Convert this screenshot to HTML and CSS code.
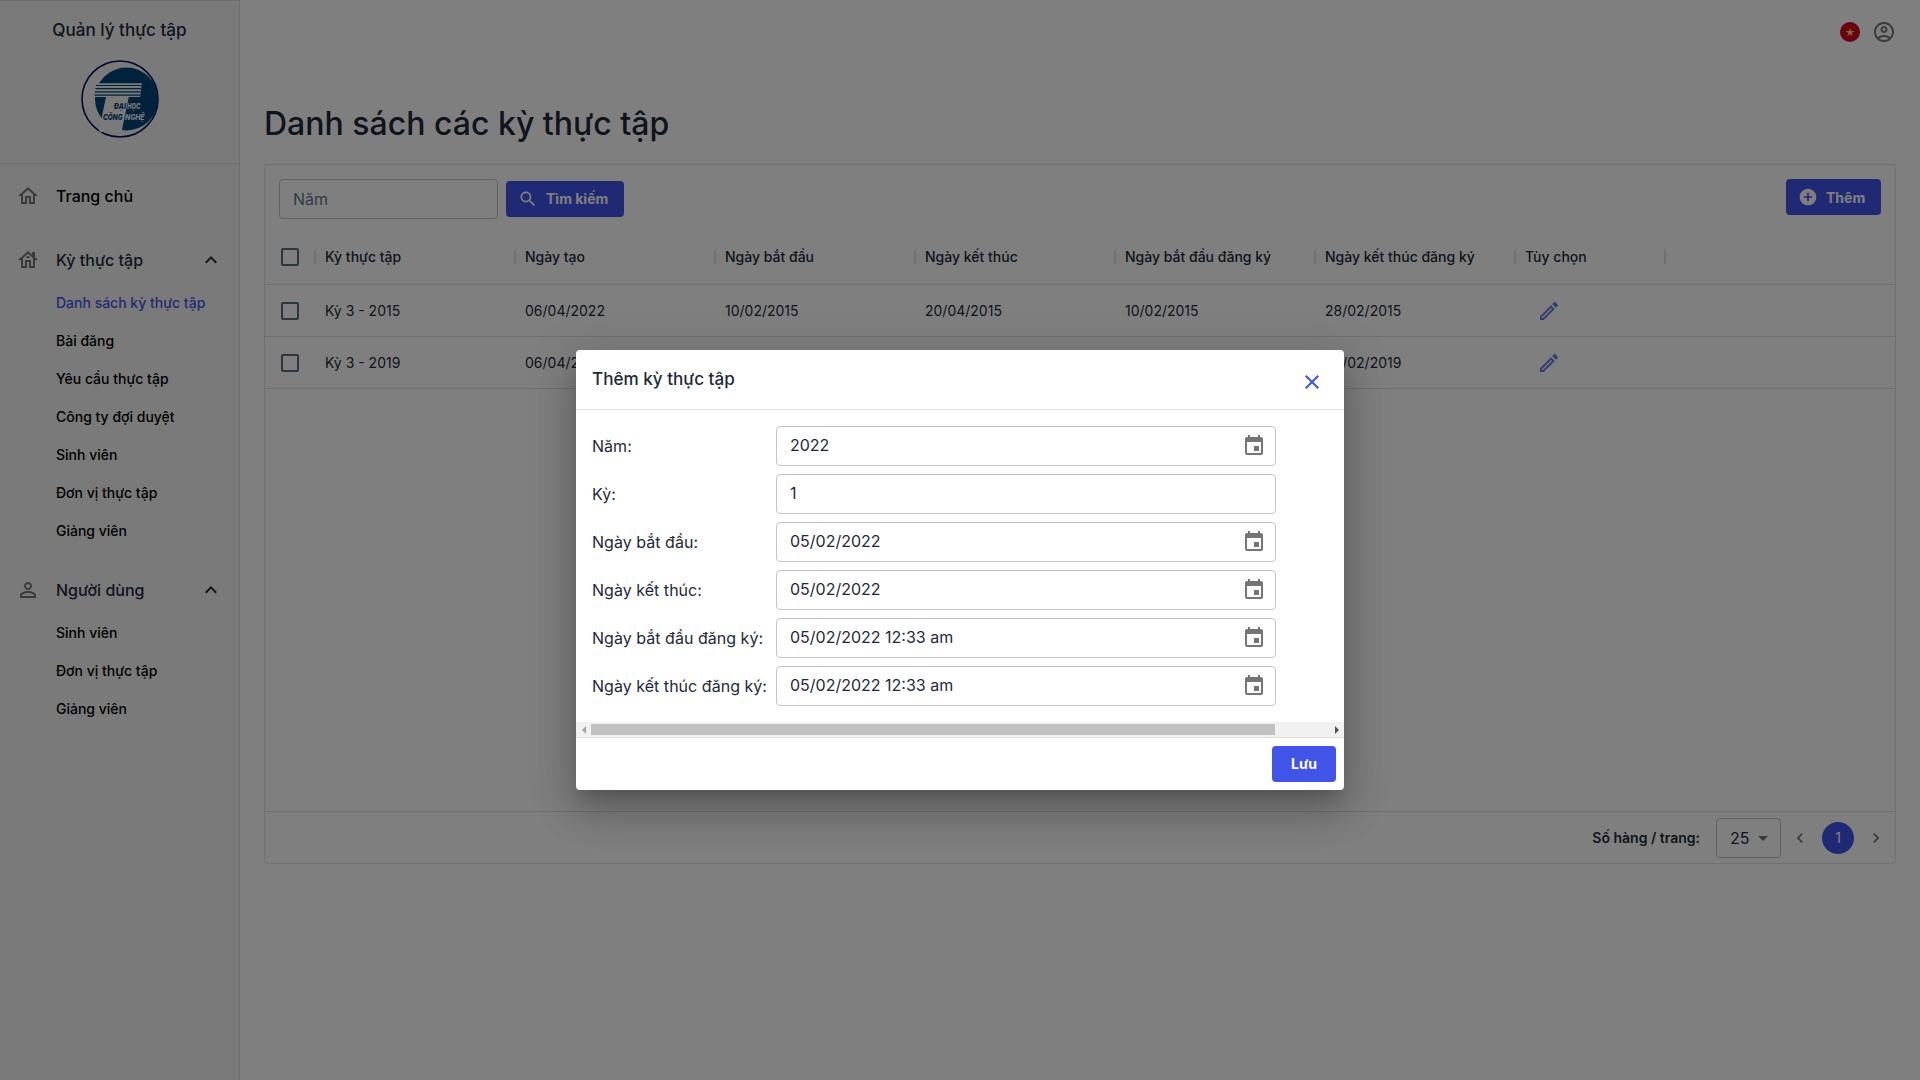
FILE: index.html
```html
<!DOCTYPE html>
<html lang="vi">
<head>
<meta charset="utf-8">
<title>Quản lý thực tập</title>
<link rel="stylesheet" href="styles.css">
</head>
<body>
<svg class="defs" width="0" height="0" aria-hidden="true">
  <symbol id="i-home" viewBox="0 0 24 24"><path d="M12 5.69l5 4.5V18h-2v-6H9v6H7v-7.81l5-4.5M12 3L2 12h3v8h6v-6h2v6h6v-8h3L12 3z"/></symbol>
  <symbol id="i-house" viewBox="0 0 24 24"><path d="M19 9.3V4h-3v2.6L12 3 2 12h3v8h6v-6h2v6h6v-8h3l-3-2.7zM17 18h-2v-6H9v6H7v-7.81l5-4.5 5 4.5V18z"/><path d="M10 10h4c0-1.1-.9-2-2-2s-2 .9-2 2z"/></symbol>
  <symbol id="i-person" viewBox="0 0 24 24"><path d="M12 5.9c1.16 0 2.1.94 2.1 2.1s-.94 2.1-2.1 2.1S9.900 9.160 9.900 8s.94-2.100 2.100-2.100m0 9c2.970 0 6.100 1.460 6.100 2.100v1.100H5.900V17c0-.64 3.130-2.100 6.100-2.100M12 4C9.790 4 8 5.790 8 8s1.790 4 4 4 4-1.790 4-4-1.790-4-4-4zm0 9c-2.670 0-8 1.340-8 4v3h16v-3c0-2.660-5.330-4-8-4z"/></symbol>
  <symbol id="i-up" viewBox="0 0 24 24"><path d="M12 8l-6 6 1.410 1.410L12 10.830l4.590 4.580L18 14z"/></symbol>
  <symbol id="i-account" viewBox="0 0 24 24"><path d="M12 2C6.480 2 2 6.480 2 12s4.480 10 10 10 10-4.480 10-10S17.520 2 12 2zM7.350 18.500C8.660 17.560 10.260 17 12 17s3.340.56 4.650 1.500C15.340 19.440 13.740 20 12 20s-3.340-.56-4.650-1.500zm10.790-1.380C16.450 15.800 14.320 15 12 15s-4.450.8-6.140 2.120C4.700 15.730 4 13.950 4 12c0-4.420 3.580-8 8-8s8 3.580 8 8c0 1.950-.7 3.730-1.860 5.120zM12 6c-1.930 0-3.500 1.570-3.500 3.500S10.070 13 12 13s3.500-1.570 3.500-3.500S13.930 6 12 6zm0 5c-.83 0-1.500-.67-1.500-1.500S11.170 8 12 8s1.500.67 1.500 1.500S12.830 11 12 11z"/></symbol>
  <symbol id="i-search" viewBox="0 0 24 24"><path d="M15.500 14h-.79l-.28-.27C15.410 12.590 16 11.110 16 9.500 16 5.910 13.090 3 9.500 3S3 5.910 3 9.500 5.910 16 9.500 16c1.610 0 3.090-.59 4.230-1.570l.27.28v.79l5 4.990L20.490 19l-4.990-5zm-6 0C7.010 14 5 11.990 5 9.500S7.010 5 9.500 5 14 7.010 14 9.500 11.990 14 9.500 14z"/></symbol>
  <symbol id="i-add" viewBox="0 0 24 24"><path d="M12 2C6.480 2 2 6.480 2 12s4.480 10 10 10 10-4.480 10-10S17.520 2 12 2zm5 11h-4v4h-2v-4H7v-2h4V7h2v4h4v2z"/></symbol>
  <symbol id="i-box" viewBox="0 0 24 24"><path d="M19 5v14H5V5h14m0-2H5c-1.100 0-2 .9-2 2v14c0 1.100.9 2 2 2h14c1.100 0 2-.9 2-2V5c0-1.100-.9-2-2-2z"/></symbol>
  <symbol id="i-edit" viewBox="0 0 24 24"><path d="M14.060 9.020l.92.92L5.920 19H5v-.92l9.060-9.060M17.660 3c-.25 0-.51.1-.7.290l-1.830 1.830 3.750 3.750 1.830-1.830c.39-.39.39-1.020 0-1.410l-2.340-2.340c-.2-.2-.45-.29-.71-.29zm-3.600 3.190L3 17.250V21h3.750L17.810 9.940l-3.750-3.750z"/></symbol>
  <symbol id="i-event" viewBox="0 0 24 24"><path d="M17 12h-5v5h5v-5zM16 1v2H8V1H6v2H5c-1.110 0-1.990.9-1.990 2L3 19c0 1.100.89 2 2 2h14c1.100 0 2-.9 2-2V5c0-1.100-.9-2-2-2h-1V1h-2zm3 18H5V8h14v11z"/></symbol>
  <symbol id="i-close" viewBox="0 0 24 24"><path d="M19 6.410L17.590 5 12 10.590 6.410 5 5 6.410 10.590 12 5 17.590 6.410 19 12 13.410 17.590 19 19 17.590 13.410 12z"/></symbol>
  <symbol id="i-drop" viewBox="0 0 24 24"><path d="M7 10l5 5 5-5z"/></symbol>
  <symbol id="i-prev" viewBox="0 0 24 24"><path d="M15.410 7.410L14 6l-6 6 6 6 1.410-1.410L10.830 12z"/></symbol>
  <symbol id="i-next" viewBox="0 0 24 24"><path d="M10 6L8.590 7.410 13.170 12l-4.580 4.590L10 18l6-6z"/></symbol>
</svg>

<div class="app">
  <aside class="sidebar">
    <div class="brand">
      <div class="brand-name">Quản lý thực tập</div>
      <svg class="logo" viewBox="0 0 80 80">
        <circle class="logo-ring" cx="40" cy="40" r="38"/>
        <circle class="logo-disc" cx="46.500" cy="40" r="31.500"/>
        <path class="logo-paper" d="M12 24.300H61.800L60.200 38H48.800L41.500 73H20L12 60L21.500 59.500L26 38H12Z"/>
        <path class="logo-lines" d="M16 26.500H61.500M15.500 29.700H61M15 32.900H60.600M14.500 36.100H60.200"/>
        <text class="logo-text" x="33.800" y="49.500" textLength="12" lengthAdjust="spacingAndGlyphs">ĐẠI</text>
        <text class="logo-text light" x="47.300" y="49.500" textLength="13" lengthAdjust="spacingAndGlyphs">HỌC</text>
        <text class="logo-text" x="23" y="60.700" textLength="19.500" lengthAdjust="spacingAndGlyphs">CÔNG</text>
        <text class="logo-text light" x="45" y="60.700" textLength="19.500" lengthAdjust="spacingAndGlyphs">NGHỆ</text>
      </svg>
    </div>
    <nav class="nav">
      <div class="nav-item strong"><svg class="icon"><use href="#i-home"/></svg><span>Trang chủ</span></div>
      <div class="nav-item"><svg class="icon"><use href="#i-house"/></svg><span>Kỳ thực tập</span><svg class="icon chev"><use href="#i-up"/></svg></div>
      <div class="sub">
        <a class="active">Danh sách kỳ thực tập</a><a>Bài đăng</a><a>Yêu cầu thực tập</a><a>Công ty đợi duyệt</a><a>Sinh viên</a><a>Đơn vị thực tập</a><a>Giảng viên</a>
      </div>
      <div class="nav-item"><svg class="icon"><use href="#i-person"/></svg><span>Người dùng</span><svg class="icon chev"><use href="#i-up"/></svg></div>
      <div class="sub"><a>Sinh viên</a><a>Đơn vị thực tập</a><a>Giảng viên</a></div>
    </nav>
  </aside>

  <main class="main">
    <header class="topbar">
      <svg class="flag" viewBox="0 0 20 20"><circle cx="10" cy="10" r="10" fill="#d80027"/><path fill="#ffda44" d="M10 5.700l1.060 3.260h3.430l-2.770 2.010 1.060 3.260L10 12.220l-2.780 2.010 1.060-3.260-2.770-2.010h3.430z"/></svg>
      <svg class="icon"><use href="#i-account"/></svg>
    </header>
    <h1>Danh sách các kỳ thực tập</h1>
    <section class="card">
      <div class="toolbar">
        <div class="search-input">Năm</div>
        <button class="btn search"><svg><use href="#i-search"/></svg>Tìm kiếm</button>
        <button class="btn add"><svg><use href="#i-add"/></svg>Thêm</button>
      </div>
      <div class="row head">
        <div class="check"><svg class="icon"><use href="#i-box"/></svg></div>
        <div>Kỳ thực tập</div><div>Ngày tạo</div><div>Ngày bắt đầu</div><div>Ngày kết thúc</div><div>Ngày bắt đầu đăng ký</div><div>Ngày kết thúc đăng ký</div><div>Tùy chọn</div>
      </div>
      <div class="row">
        <div class="check"><svg class="icon"><use href="#i-box"/></svg></div>
        <div>Kỳ 3 - 2015</div><div>06/04/2022</div><div>10/02/2015</div><div>20/04/2015</div><div>10/02/2015</div><div>28/02/2015</div><div class="edit"><svg class="icon"><use href="#i-edit"/></svg></div>
      </div>
      <div class="row">
        <div class="check"><svg class="icon"><use href="#i-box"/></svg></div>
        <div>Kỳ 3 - 2019</div><div>06/04/2022</div><div>10/02/2019</div><div>20/04/2019</div><div>10/02/2019</div><div>28/02/2019</div><div class="edit"><svg class="icon"><use href="#i-edit"/></svg></div>
      </div>
      <div class="pager">
        <span class="pager-label">Số hàng / trang:</span>
        <div class="select">25<svg class="icon"><use href="#i-drop"/></svg></div>
        <svg class="page-arrow"><use href="#i-prev"/></svg>
        <span class="page">1</span>
        <svg class="page-arrow"><use href="#i-next"/></svg>
      </div>
    </section>
  </main>
</div>

<div class="backdrop">
  <div class="dialog">
    <div class="dialog-head"><h2>Thêm kỳ thực tập</h2><svg class="icon close"><use href="#i-close"/></svg></div>
    <div class="dialog-body">
      <label>Năm:</label><div class="field">2022<svg class="icon"><use href="#i-event"/></svg></div>
      <label>Kỳ:</label><div class="field">1</div>
      <label>Ngày bắt đầu:</label><div class="field">05/02/2022<svg class="icon"><use href="#i-event"/></svg></div>
      <label>Ngày kết thúc:</label><div class="field">05/02/2022<svg class="icon"><use href="#i-event"/></svg></div>
      <label>Ngày bắt đầu đăng ký:</label><div class="field">05/02/2022 12:33 am<svg class="icon"><use href="#i-event"/></svg></div>
      <label>Ngày kết thúc đăng ký:</label><div class="field">05/02/2022 12:33 am<svg class="icon"><use href="#i-event"/></svg></div>
    </div>
    <div class="scrollbar"><i class="arrow left"></i><i class="thumb"></i><i class="arrow right"></i></div>
    <div class="dialog-foot"><button class="btn save">Lưu</button></div>
  </div>
</div>
</body>
</html>
```
FILE: styles.css
```css
* { box-sizing: border-box; }
body {
  margin: 0;
  height: 1080px;
  overflow: hidden;
  font-family: Inter, "Noto Sans", sans-serif;
  font-size: 14px;
  color: #1e2a38;
  background: #fff;
}
h1, h2 { margin: 0; font-weight: 500; }
.defs { display: block; }
.icon { width: 24px; height: 24px; fill: currentColor; flex: none; }
.app { display: flex; height: 1080px; }

.sidebar {
  width: 240px;
  flex: none;
  background: #f4f4f4;
  border-right: 1px solid #dcdcdc;
  border-top: 1px solid #dcdcdc;
}
.brand {
  height: 163px;
  padding-top: 16px;
  display: flex;
  flex-direction: column;
  align-items: center;
  border-bottom: 1px solid #dcdcdc;
}
.brand-name { font-size: 17.1px; line-height: 26px; font-weight: 500; }
.logo { width: 80px; height: 80px; margin-top: 16px; }
.logo-ring { fill: none; stroke: #00125a; stroke-width: 1.6; }
.logo-disc { fill: #00447a; }
.logo-paper { fill: #f4f4f4; }
.logo-lines { fill: none; stroke: #00447a; stroke-width: 1.2; }
.logo-text { font: italic 800 8px Inter, sans-serif; fill: #00396c; }
.logo-text.light { fill: #f4f4f4; }

.nav-item {
  height: 64px;
  display: flex;
  align-items: center;
  gap: 16px;
  padding: 0 16px;
  font-size: 16px;
  font-weight: 500;
}
.nav-item.strong { color: #000; }
.nav-item .icon { color: #757575; }
.nav-item .icon.chev { margin-left: auto; color: #1e2a38; }
.sub { padding: 0 0 8px 56px; margin-top: -8px; font-weight: 500; color: #000; }
.sub a { display: block; height: 38px; line-height: 38px; white-space: nowrap; }
.sub .active { color: #4355e9; }

.main { flex: 1; padding: 0 24px; }
.topbar { height: 64px; display: flex; justify-content: flex-end; align-items: center; gap: 12px; }
.topbar .icon { color: #757575; }
.flag { width: 20px; height: 20px; }
h1 { font-size: 32px; line-height: 40px; margin: 40px 0 20px; }

.card {
  height: 700px;
  border: 1px solid #e0e0e0;
  border-radius: 4px;
  display: flex;
  flex-direction: column;
}
.toolbar { height: 64px; flex: none; padding: 14px 14px 0; display: flex; align-items: flex-start; gap: 8px; }
.search-input {
  width: 219px;
  height: 40px;
  padding: 0 13px;
  line-height: 38px;
  font-size: 16px;
  color: #65748b;
  border: 1px solid #c4c4c4;
  border-radius: 4px;
}
.btn {
  height: 36px;
  margin-top: 2px;
  padding: 0 0 1px 12px;
  display: flex;
  align-items: center;
  gap: 8px;
  border: 0;
  border-radius: 4px;
  background: #4154e8;
  color: #fff;
  font: 700 14px Inter, "Noto Sans", sans-serif;
  white-space: nowrap;
}
.btn svg { width: 20px; height: 20px; fill: currentColor; }
.btn.search { width: 118px; }
.btn.add { width: 95px; margin: 0 0 0 auto; padding-bottom: 0; }

.row {
  height: 52px;
  flex: none;
  display: grid;
  grid-template-columns: 50px repeat(6, 200px) 150px;
  align-items: center;
  border-bottom: 1px solid #e0e0e0;
}
.row > div { padding-left: 10px; }
.row .check { padding-left: 13px; color: #546e7a; }
.row .icon { display: block; }
.row.head { height: 56px; font-weight: 500; }
.row.head > div + div { line-height: 14px; border-left: 2px solid #e0e0e0; margin-left: -1px; padding-left: 9px; }
.row.head > div:last-child { border-right: 2px solid #e0e0e0; margin-right: -1px; }
.row .edit { padding-left: 22px; color: #4154e8; opacity: 0.78; }

.pager {
  height: 52px;
  margin-top: auto;
  padding-right: 8px;
  display: flex;
  justify-content: flex-end;
  align-items: center;
  border-top: 1px solid #e0e0e0;
}
.pager-label { font-weight: 600; }
.select {
  width: 65px;
  height: 40px;
  margin: 0 8px 0 16px;
  padding: 0 6px 0 13px;
  display: flex;
  align-items: center;
  justify-content: space-between;
  border: 1px solid #c4c4c4;
  border-radius: 4px;
  font-size: 16px;
  line-height: 36px;
}
.select .icon { color: #757575; margin-right: -1px; }
.page-arrow { width: 20px; height: 20px; margin: 0 1px; fill: #757575; }
.page {
  width: 32px;
  height: 32px;
  margin: 0 11px;
  border-radius: 50%;
  background: #4154e8;
  color: #fff;
  line-height: 32px;
  text-align: center;
}

.backdrop {
  position: absolute;
  inset: 0;
  display: flex;
  align-items: center;
  justify-content: center;
  padding-top: 60px;
  background: rgba(0, 0, 0, 0.5);
}
.dialog {
  width: 768px;
  height: 440px;
  display: flex;
  flex-direction: column;
  background: #fff;
  border-radius: 4px;
  box-shadow: 0 11px 15px -7px rgba(0, 0, 0, 0.2), 0 24px 38px 3px rgba(0, 0, 0, 0.14), 0 9px 46px 8px rgba(0, 0, 0, 0.12);
}
.dialog-head {
  height: 60px;
  padding: 16px 20px 0 16px;
  display: flex;
  justify-content: space-between;
  border-bottom: 1px solid #e0e0e0;
}
.dialog-head h2 { font-size: 17.1px; line-height: 26px; }
.close { color: #4154e8; margin-top: 4px; }
.dialog-body {
  height: 312px;
  padding: 16px 68px 16px 16px;
  display: grid;
  grid-template-columns: 184px 500px;
  grid-auto-rows: 40px;
  row-gap: 8px;
  font-size: 16px;
}
.dialog-body label { line-height: 40px; white-space: nowrap; letter-spacing: 0.03px; }
.field {
  padding: 0 9px 2px 13px;
  display: flex;
  align-items: center;
  justify-content: space-between;
  border: 1px solid #c4c4c4;
  border-radius: 4px;
  line-height: 36px;
}
.field .icon { color: #757575; margin-top: 2px; }
.scrollbar {
  height: 15px;
  display: flex;
  align-items: center;
  background: #f1f1f1;
}
.arrow { width: 15px; display: flex; justify-content: center; }
.arrow::before { content: ""; border: 4px solid transparent; border-width: 4px 0; }
.arrow.left::before { border-right: 4px solid #a3a3a3; }
.arrow.right { margin-left: auto; }
.arrow.right::before { border-left: 4px solid #505050; }
.thumb { width: 684px; height: 11px; background: #c1c1c1; }
.dialog-foot {
  flex: 1;
  padding: 8px 8px 0;
  display: flex;
  justify-content: flex-end;
  border-top: 1px solid #e0e0e0;
}
.btn.save { width: 64px; margin: 0; padding: 0 0 2px; justify-content: center; }
```
